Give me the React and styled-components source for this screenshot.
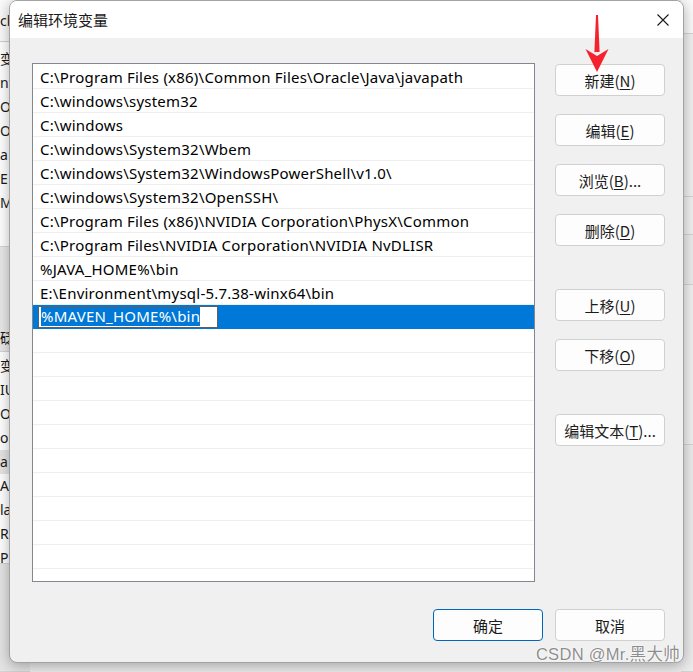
import React from 'react';
import styled, { createGlobalStyle } from 'styled-components';

const GlobalStyle = createGlobalStyle`
  html, body { margin: 0; padding: 0; }
  body {
    font-family: "Noto Sans", "Noto Sans CJK SC", sans-serif;
    color: #1b1b1b;
  }
`;

const Desktop = styled.div`
  position: relative;
  width: 693px;
  height: 672px;
  overflow: hidden;
  background: #ececec;
  display: flex;
  justify-content: space-between;
`;

// the window behind the dialog, only its edges show
const BackColumn = styled.div`
  width: ${p => p.$width}px;
  display: flex;
  flex-direction: column;
  overflow: hidden;
  font-size: 14px;
  color: #1a1a1a;
`;

const BackTitle = styled.div`
  height: 42px;
  background: #fafafa;
  border-bottom: 1px solid #cfcfcf;
  display: flex;
  align-items: center;
  white-space: nowrap;
`;

const BackSection = styled.div`
  background: ${p => p.$bg || '#ffffff'};
  padding: ${p => p.$pad || '0'};
  border-bottom: 1px solid #d4d4d4;
  height: ${p => (p.$height ? `${p.$height}px` : 'auto')};
  box-sizing: border-box;
`;

const BackRow = styled.div`
  height: 24px;
  line-height: 24px;
  white-space: nowrap;
  background: ${p => (p.$hl ? '#e5e5e5' : 'transparent')};
`;

const Dialog = styled.div`
  position: absolute;
  left: 9px;
  top: 0;
  width: 675px;
  height: 663px;
  box-sizing: border-box;
  border: 1px solid #a3a3a3;
  border-radius: 8px;
  overflow: hidden;
  background: #f0f0f0;
  display: flex;
  flex-direction: column;
  box-shadow: 0 3px 14px rgba(0, 0, 0, 0.3);
`;

const TitleBar = styled.div`
  height: 37px;
  flex: none;
  background: #ffffff;
  display: flex;
  align-items: center;
  justify-content: space-between;
  padding: 0 14px 0 8px;
`;

const Title = styled.div`
  font-size: 15px;
  font-family: "Noto Sans CJK SC", sans-serif;
  color: #1a1a1a;
  padding-bottom: 1px;
`;

const Body = styled.div`
  flex: 1;
  display: flex;
  flex-direction: column;
  padding: 25px 18px 21px 22px;
`;

const Main = styled.div`
  display: grid;
  grid-template-columns: 503px 110px;
  column-gap: 20px;
  height: 519px;
`;

const PathList = styled.div`
  border: 1px solid #828790;
  background: #ffffff;
  padding-top: 1px;
  overflow: hidden;
`;

const Row = styled.div`
  height: 24px;
  box-sizing: border-box;
  border-bottom: 1px solid ${p => (p.$selected ? '#0078d7' : '#efefef')};
  background: ${p => (p.$selected ? '#0078d7' : '#ffffff')};
  padding-left: ${p => (p.$selected ? 5 : 7)}px;
  display: flex;
  align-items: center;
  font-size: 15px;
  letter-spacing: 0.22px;
  color: #000;
  white-space: nowrap;
`;

const EditBox = styled.div`
  width: 180px;
  height: 22px;
  box-sizing: border-box;
  border: 1px solid #5f5f5f;
  background: #ffffff;
  padding: 0 2px;
  display: flex;
  align-items: center;
`;

const Selection = styled.span`
  background: #0078d7;
  color: #ffffff;
  line-height: 19px;
`;

const ButtonColumn = styled.div`
  display: flex;
  flex-direction: column;
  padding-top: 1px;
`;

const Button = styled.button`
  width: 110px;
  height: 32px;
  margin-top: ${p => p.$gap || 0}px;
  box-sizing: border-box;
  border: 1px solid ${p => (p.$primary ? '#0067c0' : '#d0d0d0')};
  border-radius: 4px;
  background: #fdfdfd;
  font-family: "Noto Sans CJK SC", sans-serif;
  font-size: 15px;
  color: #1b1b1b;
  padding: 0;
  display: flex;
  align-items: center;
  justify-content: center;

  u {
    text-underline-offset: 2px;
  }
`;

const Footer = styled.div`
  display: flex;
  justify-content: flex-end;
  gap: 12px;
  margin-top: 27px;
`;

const Arrow = styled.svg`
  position: absolute;
  left: 584px;
  top: 12px;
`;

const Watermark = styled.div`
  position: absolute;
  right: 13px;
  top: 641px;
  font-family: "Liberation Sans", "Noto Sans CJK SC", sans-serif;
  font-size: 16.5px;
  letter-spacing: 0.3px;
  color: rgba(120, 120, 120, 0.85);
  text-shadow: 0 0 2px #ffffff, 0 0 1px #ffffff;
`;

const paths = [
  'C:\\Program Files (x86)\\Common Files\\Oracle\\Java\\javapath',
  'C:\\windows\\system32',
  'C:\\windows',
  'C:\\windows\\System32\\Wbem',
  'C:\\windows\\System32\\WindowsPowerShell\\v1.0\\',
  'C:\\windows\\System32\\OpenSSH\\',
  'C:\\Program Files (x86)\\NVIDIA Corporation\\PhysX\\Common',
  'C:\\Program Files\\NVIDIA Corporation\\NVIDIA NvDLISR',
  '%JAVA_HOME%\\bin',
  'E:\\Environment\\mysql-5.7.38-winx64\\bin',
];

const sideButtons = [
  { label: '新建', key: 'N', gap: 0 },
  { label: '编辑', key: 'E', gap: 18 },
  { label: '浏览', key: 'B', gap: 18, more: true },
  { label: '删除', key: 'D', gap: 18 },
  { label: '上移', key: 'U', gap: 43 },
  { label: '下移', key: 'O', gap: 18 },
  { label: '编辑文本', key: 'T', gap: 43, more: true },
];

function CloseIcon() {
  return (
    <svg width="12" height="12" viewBox="0 0 12 12">
      <path d="M0.5 0.5 L11.5 11.5 M11.5 0.5 L0.5 11.5" stroke="#1a1a1a" strokeWidth="1.1" fill="none" />
    </svg>
  );
}

export default function App() {
  const emptyRows = Array.from({ length: 12 });

  return (
    <Desktop>
      <GlobalStyle />
      <BackColumn $width={30}>
        <BackTitle>ck</BackTitle>
        <BackSection $pad="5px 0 0" $height={208}>
          {['变', 'nt', 'Or', 'Or', 'a', 'E', 'M'].map((t, i) => (
            <BackRow key={i}>{t}</BackRow>
          ))}
        </BackSection>
        <BackSection $bg="#e9e9e9" $height={105} $pad="79px 0 0">
          <BackRow>砭</BackRow>
        </BackSection>
        <BackSection $pad="2px 0 0" $height={212}>
          {['变', 'IU', 'Or', 'oS', 'a', 'A', 'la', 'R', 'P'].map((t, i) => (
            <BackRow key={i} $hl={i === 4}>{t}</BackRow>
          ))}
        </BackSection>
        <BackSection $bg="#e4e4e4" $height={110} />
      </BackColumn>

      <BackColumn $width={12}>
        <BackSection $bg="#fafafa" $height={34} />
        <BackSection $bg="#f0f0f0" $height={163} />
        <BackSection $bg="#f0f0f0" $height={38} />
        <BackSection $bg="#ececec" $height={50} />
        <BackSection $bg="#f0f0f0" $height={160} />
        <BackSection $bg="#ececec" $height={227} />
      </BackColumn>

      <Dialog>
        <TitleBar>
          <Title>编辑环境变量</Title>
          <CloseIcon />
        </TitleBar>
        <Body>
          <Main>
            <PathList>
              {paths.map(p => (
                <Row key={p}>{p}</Row>
              ))}
              <Row $selected>
                <EditBox>
                  <Selection>%MAVEN_HOME%\bin</Selection>
                </EditBox>
              </Row>
              {emptyRows.map((_, i) => (
                <Row key={`e${i}`} />
              ))}
            </PathList>
            <ButtonColumn>
              {sideButtons.map(b => (
                <Button key={b.key} $gap={b.gap}>
                  {b.label}(<u>{b.key}</u>){b.more ? '...' : ''}
                </Button>
              ))}
            </ButtonColumn>
          </Main>
          <Footer>
            <Button $primary>确定</Button>
            <Button>取消</Button>
          </Footer>
        </Body>
      </Dialog>

      <Arrow width="28" height="62" viewBox="0 0 28 62">
        <path d="M12 3 L14 3 L15.6 40 L10.4 40 Z" fill="#f5222d" />
        <path d="M1.5 37 L13 44 L24.5 37 L13 60 Z" fill="#f5222d" />
      </Arrow>

      <Watermark>CSDN @Mr.黑大帅</Watermark>
    </Desktop>
  );
}
